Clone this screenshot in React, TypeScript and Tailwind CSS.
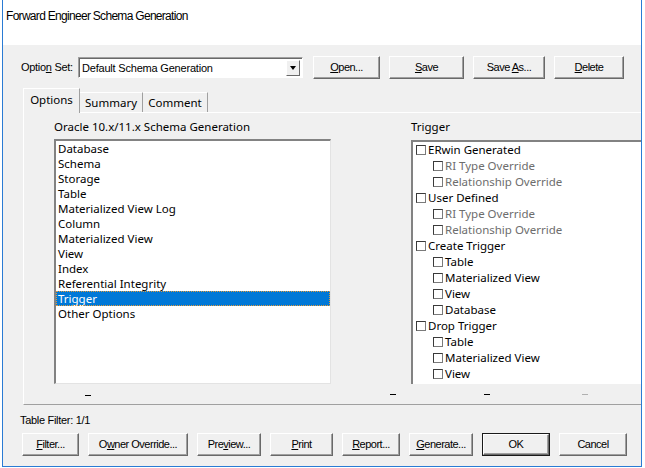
import React from "react";

const ui = "font-['Liberation_Sans',Arial,sans-serif] text-[11px] text-black";
const listFont = "font-['Noto_Sans','Liberation_Sans',sans-serif] text-[11.5px] text-black";

function Mn({ pre, u, post }: { pre?: string; u: string; post?: string }) {
  return (
    <span>
      {pre}
      <span className="underline underline-offset-1">{u}</span>
      {post}
    </span>
  );
}

function Btn({ w, children, def }: { w: string; children: React.ReactNode; def?: boolean }) {
  return (
    <div className={`${w} h-[23px] shrink-0 ${def ? "border border-[#1a1a1a]" : ""}`}>
      <div className="flex h-full items-center justify-center border border-t-white border-l-white border-r-[#696969] border-b-[#696969] bg-[#f0f0f0] shadow-[inset_-1px_-1px_0_#a0a0a0] tracking-[-0.5px]">
        {children}
      </div>
    </div>
  );
}

function Box() {
  return (
    <span className="inline-block h-[10px] w-[10px] shrink-0 border border-t-[#3a3a3a] border-l-[#3a3a3a] border-r-[#7a7a7a] border-b-[#7a7a7a] bg-white" />
  );
}

const listItems = [
  "Database",
  "Schema",
  "Storage",
  "Table",
  "Materialized View Log",
  "Column",
  "Materialized View",
  "View",
  "Index",
  "Referential Integrity",
  "Trigger",
  "Other Options",
];

const tree: { label: string; level: number; off?: boolean }[] = [
  { label: "ERwin Generated", level: 0 },
  { label: "RI Type Override", level: 1, off: true },
  { label: "Relationship Override", level: 1, off: true },
  { label: "User Defined", level: 0 },
  { label: "RI Type Override", level: 1, off: true },
  { label: "Relationship Override", level: 1, off: true },
  { label: "Create Trigger", level: 0 },
  { label: "Table", level: 1 },
  { label: "Materialized View", level: 1 },
  { label: "View", level: 1 },
  { label: "Database", level: 1 },
  { label: "Drop Trigger", level: 0 },
  { label: "Table", level: 1 },
  { label: "Materialized View", level: 1 },
  { label: "View", level: 1 },
];

export default function App() {
  return (
    <div className={`h-[468px] w-[645px] overflow-hidden bg-white ${ui}`}>
      <div className="ml-[2px] flex h-[467px] w-[640px] flex-col overflow-hidden border-x border-b border-[#2a7bd4]">
        <div className="h-[45px] shrink-0 bg-white pl-[3px] pt-[8px] text-[12px] leading-[16px] tracking-[-0.7px]">
          Forward Engineer Schema Generation
        </div>

        <div className="flex flex-1 flex-col bg-[#f0f0f0]">
          {/* option set row */}
          <div className="mt-[11px] flex h-[23px] items-center pl-[18px]">
            <span className="w-[57px] shrink-0 tracking-[-0.3px]">
              <Mn pre="Optio" u="n" post=" Set:" />
            </span>
            <div className="flex h-[21px] w-[225px] shrink-0 items-center border border-t-[#a0a0a0] border-l-[#a0a0a0] border-r-white border-b-white bg-white shadow-[inset_1px_1px_0_#696969]">
              <span className="flex-1 pl-[3px] pt-[1px] tracking-[-0.2px]">Default Schema Generation</span>
              <div className="mr-[2px] flex h-[16px] w-[14px] items-center justify-center border border-t-white border-l-white border-r-[#696969] border-b-[#696969] bg-[#f0f0f0]">
                <span className="h-0 w-0 border-x-[3.5px] border-t-[4px] border-x-transparent border-t-black" />
              </div>
            </div>
            <div className="ml-[10px] flex gap-[9px]">
              <Btn w="w-[67px]"><Mn u="O" post="pen..." /></Btn>
              <Btn w="w-[75px]"><Mn u="S" post="ave" /></Btn>
              <Btn w="w-[72px]"><Mn pre="Save " u="A" post="s..." /></Btn>
              <Btn w="w-[70px]"><Mn u="D" post="elete" /></Btn>
            </div>
          </div>

          {/* tabs */}
          <div className={`mt-[9px] flex h-[24px] items-end pl-[20px] ${listFont}`}>
            <div className="relative z-10 -mb-[1px] flex h-[25px] w-[57px] items-start justify-center border-t border-l border-r border-t-white border-l-white border-r-[#a0a0a0] bg-[#f0f0f0] pt-[2px]">
              Options
            </div>
            <div className="flex h-[20px] w-[63px] items-start justify-center border-t border-r border-t-white border-r-[#a0a0a0] bg-[#f0f0f0] pt-[1px]">
              Summary
            </div>
            <div className="flex h-[20px] w-[65px] items-start justify-center border-t border-r border-t-white border-r-[#a0a0a0] bg-[#f0f0f0] pt-[1px]">
              Comment
            </div>
          </div>

          {/* panel */}
          <div className={`ml-[20px] h-[293px] w-[700px] border-t border-l border-b border-t-white border-l-white border-b-[#a0a0a0] ${listFont}`}>
            <div className="flex pl-[30px] pt-[6px]">
              <div className="flex w-[277px] flex-col">
                <div className="h-[20px] leading-[16px]">Oracle 10.x/11.x Schema Generation</div>
                <div className="h-[245px] border-t-2 border-l-2 border-t-[#828282] border-l-[#828282] border-b border-r border-b-[#e3e3e3] border-r-[#e3e3e3] bg-white">
                  {listItems.map((it) => (
                    <div
                      key={it}
                      className={`h-[15px] pl-[2px] leading-[15px] ${
                        it === "Trigger"
                          ? "bg-[#0078d7] text-white outline outline-1 -outline-offset-1 outline-dotted outline-[#e39a3a]"
                          : ""
                      }`}
                    >
                      {it}
                    </div>
                  ))}
                </div>
                <div className="mt-[11px] ml-[31px] h-px w-[6px] bg-black" />
              </div>

              <div className="ml-[80px] flex w-[260px] flex-col">
                <div className="h-[21px] leading-[16px]">Trigger</div>
                <div className="h-[244px] border-t-2 border-l-2 border-t-[#828282] border-l-[#828282] bg-white pl-[3px]">
                  {tree.map((t, i) => (
                    <div
                      key={i}
                      className={`flex h-[16px] items-center gap-[2px] ${t.level ? "pl-[17px]" : ""} ${
                        t.off ? "text-[#6d6d6d]" : ""
                      }`}
                    >
                      <Box />
                      <span className="leading-[16px]">{t.label}</span>
                    </div>
                  ))}
                </div>
                <div className="mt-[10px] flex">
                  <span className="-ml-[21px] h-px w-[6px] bg-black" />
                  <span className="ml-[88px] h-px w-[6px] bg-black" />
                  <span className="ml-[92px] h-px w-[6px] bg-[#b0b0b0]" />
                </div>
              </div>
            </div>
          </div>

          <div className="mt-[10px] h-[11px] overflow-hidden pl-[17px]">
            <div className="-mt-[2px] leading-[14px] tracking-[-0.3px]">Table Filter: 1/1</div>
          </div>

          <div className="mt-[7px] flex gap-[9px] pl-[19px]">
            <Btn w="w-[57px]"><Mn u="F" post="ilter..." /></Btn>
            <Btn w="w-[100px]"><Mn pre="O" u="w" post="ner Override..." /></Btn>
            <Btn w="w-[64px]"><Mn pre="Pre" u="v" post="iew..." /></Btn>
            <Btn w="w-[63px]"><Mn u="P" post="rint" /></Btn>
            <Btn w="w-[58px]"><Mn u="R" post="eport..." /></Btn>
            <Btn w="w-[64px]"><Mn u="G" post="enerate..." /></Btn>
            <Btn w="w-[68px]" def>OK</Btn>
            <Btn w="w-[68px]">Cancel</Btn>
          </div>
        </div>
      </div>
    </div>
  );
}
